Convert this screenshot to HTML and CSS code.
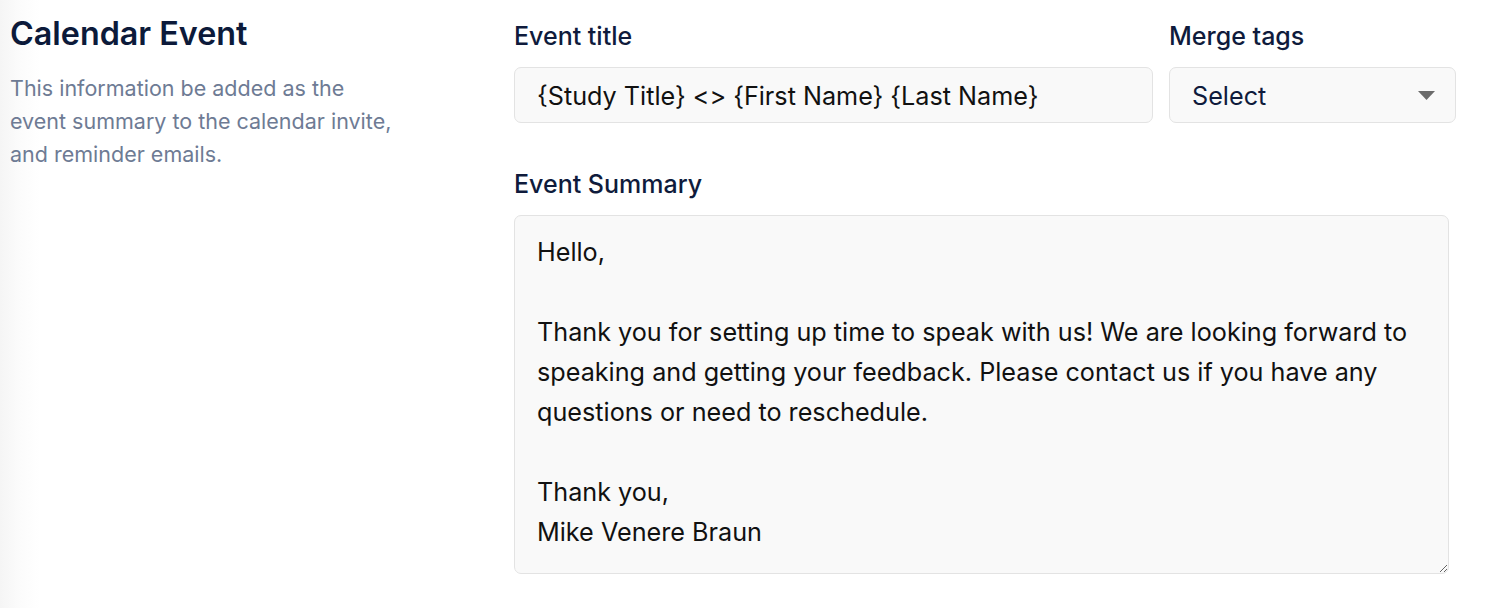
FILE: index.html
```html
<!DOCTYPE html>
<html lang="en">
<head>
<meta charset="utf-8">
<title>Calendar Event</title>
<link rel="stylesheet" href="styles.css">
</head>
<body>
<main class="page">
  <section class="intro">
    <h1 class="intro-title">Calendar Event</h1>
    <p class="intro-text">This information be added as the event summary to the calendar invite, and reminder emails.</p>
  </section>
  <section class="form">
    <div class="row">
      <div class="field field-title">
        <label class="label" for="title">Event title</label>
        <input class="input" id="title" type="text" value="{Study Title} <> {First Name} {Last Name}">
      </div>
      <div class="field field-merge">
        <span class="label">Merge tags</span>
        <div class="select">
          <span class="select-text">Select</span>
          <svg class="caret" width="17" height="9" viewBox="0 0 17 9"><path d="M0 0 H17 L8.5 9 Z" fill="#6b6b6b"/></svg>
        </div>
      </div>
    </div>
    <div class="field field-summary">
      <label class="label" for="summary">Event Summary</label>
      <textarea class="textarea" id="summary">Hello,

Thank you for setting up time to speak with us! We are looking forward to speaking and getting your feedback. Please contact us if you have any questions or need to reschedule.

Thank you,
Mike Venere Braun</textarea>
    </div>
  </section>
</main>
</body>
</html>
```

FILE: styles.css
```css
* { box-sizing: border-box; }
html, body { margin: 0; height: 100%; }
body {
  font-family: Inter, "Noto Sans", sans-serif;
  background: linear-gradient(to right, #f5f5f5 0px, #fbfbfb 18px, #ffffff 40px);
  color: #111;
}
.page {
  display: grid;
  grid-template-columns: 504px 1fr;
  padding: 0 34px 0 10px;
}
.intro { padding-top: 14px; }
.intro-title {
  margin: 0;
  font-size: 32.3px;
  line-height: 40px;
  font-weight: 600;
  color: #0c1a3a;
}
.intro-text {
  margin: 18px 0 0;
  width: 390px;
  font-size: 21.5px;
  line-height: 33px;
  color: #6e7b94;
}
.form { padding-top: 20px; }
.row { display: flex; gap: 16px; }
.field { display: flex; flex-direction: column; }
.field-title { flex: 1; }
.field-merge { width: 287px; }
.field-summary { margin-top: 45px; width: 935px; }
.label {
  font-size: 25px;
  line-height: 32px;
  font-weight: 500;
  color: #0f1b3c;
  margin-bottom: 15px;
}
.input, .select, .textarea {
  border: 1px solid #e3e3e3;
  border-radius: 7px;
  background: #f9f9f9;
  font-family: Inter, "Noto Sans", sans-serif;
  font-size: 25.2px;
  color: #111;
}
.input {
  height: 56px;
  padding: 1px 22px 0;
  width: 100%;
  outline: none;
}
.select {
  height: 56px;
  display: flex;
  align-items: center;
  justify-content: space-between;
  padding: 1px 20px 0 22px;
}
.select-text { color: #0f1b3c; }
.caret { display: block; }
.textarea {
  height: 359px;
  padding: 16px 22px 14px;
  line-height: 40px;
  resize: both;
  outline: none;
  width: 100%;
}
```
